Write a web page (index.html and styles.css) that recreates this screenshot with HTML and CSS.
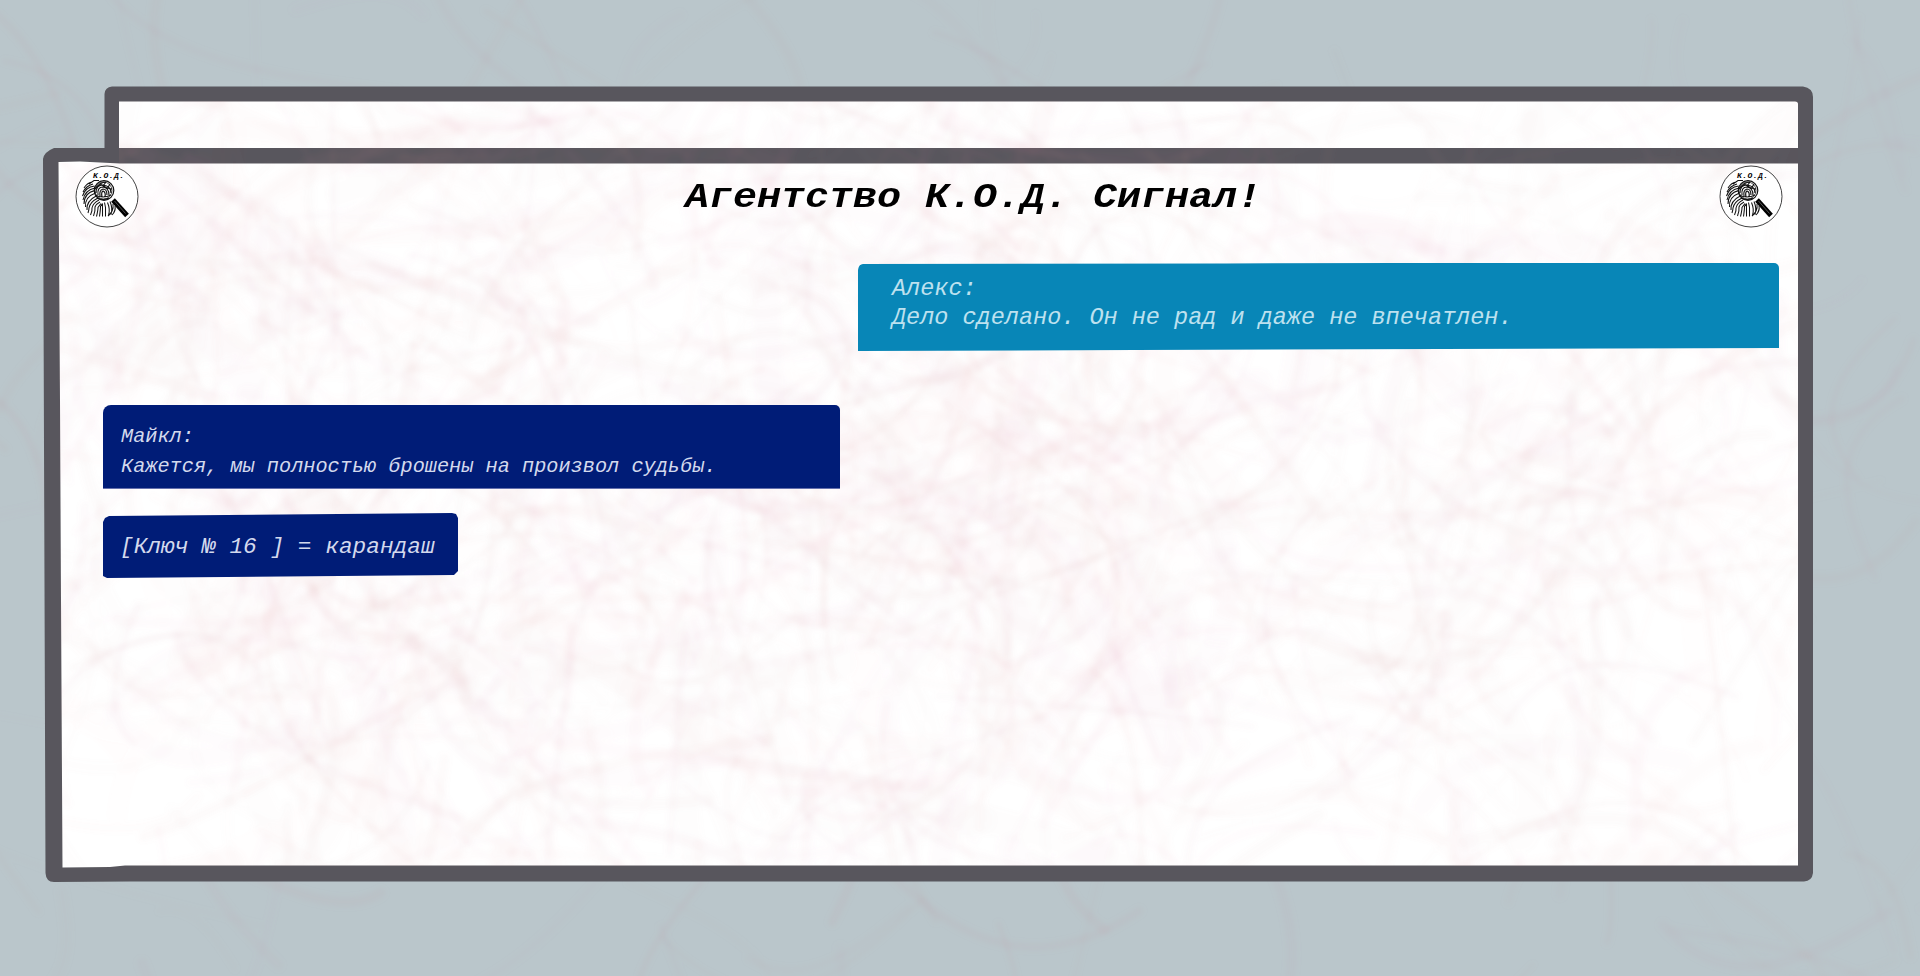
FILE: index.html
```html
<!DOCTYPE html>
<html lang="ru">
<head>
<meta charset="utf-8">
<title>Агентство К.О.Д. Сигнал!</title>
<link rel="stylesheet" href="styles.css">
</head>
<body>
<svg class="scene" viewBox="0 0 1920 976" aria-hidden="true">
  <defs>
    <filter id="soft" x="0" y="0" width="1920" height="976" filterUnits="userSpaceOnUse"><feGaussianBlur stdDeviation="2.4"/></filter>
    <filter id="edge" x="0" y="0" width="1920" height="976" filterUnits="userSpaceOnUse"><feGaussianBlur stdDeviation="0.6"/></filter>
    <clipPath id="paper"><path d="M119 101H1798V866H62L58 163H119Z"/></clipPath>
  </defs>
  <g id="haze" class="haze" filter="url(#soft)"></g>
  <g filter="url(#edge)">
    <path class="frame" d="M112 86.500H1803Q1813 88 1813 97V873Q1812 881 1804 881.500H130L54 882Q46 882 45.500 873L43 159Q44 152 54 148H104.500V94Q105 87 112 86.500Z"/>
    <path class="sheet" d="M119 101.500H1795Q1798 101.500 1798 104V148H119Z"/>
    <path class="sheet" d="M58.500 162L80 161.500L120 163.500H1798V865.500H125L110 867L62.500 867.500L61 600L60 400Z"/>
  </g>
  <g id="veins" class="veins" clip-path="url(#paper)" filter="url(#soft)"></g>
</svg>

<svg width="64" height="64" class="defs" aria-hidden="true">
  <symbol id="badge" viewBox="0 0 64 64">
    <ellipse cx="32" cy="31.500" rx="31" ry="30.500" fill="#fff" stroke="#111" stroke-width=".8"/>
    <g fill="none" stroke="#111" stroke-width="1.050">
      <path d="M9 23q3-5 8-6M8 27q3-6 10-8M7.500 31q3-9 12-10M8 35q2-10 12-12M9 39q0-11 11-13.500M10.500 42q-1-10 10-14M14 19l5-3.500h5"/>
      <path d="M12 45q-1-9 10-14.500M13 48q1-3 1-5q1-6 9-10M15.500 50q2-4 1.500-7q1-5 7-8M18.500 51q2-5 1.500-9q1-3 5-5M21.500 51.500q1.500-6 1.500-9l3-4M24.500 51.500q1-7 1-10l2-3M27.500 51.500v-13M30.500 51.500v-9l-1-5M33.500 50.500q2-6-1-13M36 49.500q2-6-1-13M33 51q6-5 5-12M37 50q4-4 3-9"/>
      <circle cx="29" cy="25.500" r="9.800" stroke-width="1.200"/>
      <circle cx="28.500" cy="25.500" r="8.500" stroke-width=".7"/>
      <path d="M21 28q0-8 7-8q8 1 8 8M23 30q-1-8 5-8q6 1 6 8M25 31q-1-6 3-7q4 0 4 6M27 32q-1-5 1-6q3 1 2 6M20 24q5-7 11-7M25 19l7 4l5 1M31 17l-3 4M35 19l-3 5M20 30q8 4 16 0M22 33q6 3 12 0" stroke-width="1.200"/>
    </g>
    <path d="M38 35L52 50.500" stroke="#000" stroke-width="5" fill="none"/>
    <path d="M39.500 36L50.500 48.500" stroke="#777" stroke-width=".7" fill="none"/>
    <text x="18" y="13" class="badge-text" textLength="31">К.О.Д.</text>
  </symbol>
</svg>

<main class="window">
  <header class="header">
    <svg class="badge"><use href="#badge"/></svg>
    <h1 class="title">Агентство К.О.Д. Сигнал!</h1>
    <svg class="badge"><use href="#badge"/></svg>
  </header>
  <section class="chat">
    <article class="bubble alex">
      <p class="line">Алекс:</p>
      <p class="line">Дело сделано. Он не рад и даже не впечатлен.</p>
    </article>
    <article class="bubble michael">
      <p class="line">Майкл:</p>
      <p class="line">Кажется, мы полностью брошены на произвол судьбы.</p>
    </article>
    <article class="bubble key">
      <p class="line">[Ключ № 16 ] = карандаш</p>
    </article>
  </section>
</main>
<script src="texture.js"></script>
</body>
</html>
```
FILE: styles.css
```css
* { box-sizing: border-box; }

body {
  margin: 0;
  width: 1920px;
  height: 976px;
  overflow: hidden;
  background: #bac6cb;
  font-family: "Liberation Mono", monospace;
}

.scene {
  position: absolute;
  inset: 0;
  width: 1920px;
  height: 976px;
}

.defs { position: absolute; }
.frame { fill: #58575d; }
.sheet { fill: #fff; }
.veins, .haze { fill: none; stroke-linecap: round; }
.veins { stroke: #d6949c; }
.haze { stroke: #bd9aa2; }

.window {
  position: relative;
  padding: 165px 137px 0 75px;
}

.header {
  display: flex;
  justify-content: space-between;
  height: 98px;
}

.badge {
  width: 64px;
  height: 64px;
  overflow: visible;
}

.badge-text {
  font: italic bold 8px "Liberation Mono", monospace;
}

.title {
  margin: 6px 0 0 88px;
  font-size: 40px;
  line-height: 48px;
  font-style: italic;
  font-weight: bold;
  white-space: nowrap;
  color: #000;
  transform: scaleY(0.86);
}

.chat {
  display: flex;
  flex-direction: column;
  align-items: flex-start;
  padding: 0 4px 0 28px;
}

.bubble { font-style: italic; }

.line {
  margin: 0;
  white-space: nowrap;
}

.alex {
  align-self: flex-end;
  width: 921px;
  height: 89px;
  padding: 12px 0 0 34px;
  background: #0886b7;
  color: #bde1ef;
  font-size: 23.5px;
  line-height: 28.5px;
  border-radius: 7px 5px 0 0;
  clip-path: polygon(0 5px, 1px 2px, 5px 1px, 40% 0.5px, 96% -1px, 100% 0, 100% 85px, 30% 87px, 0 88px);
}

.michael {
  width: 737px;
  height: 84px;
  margin-top: 53px;
  padding: 17px 0 0 18px;
  background: #001c77;
  color: #d3d9ed;
  font-size: 20.25px;
  line-height: 29.5px;
  border-radius: 8px 5px 0 0;
  border-bottom: 1px solid #6570ad;
}

.key {
  width: 355px;
  height: 66px;
  margin-top: 24px;
  padding: 19px 0 0 17px;
  background: #001c77;
  color: #d3d9ed;
  font-size: 22.8px;
  line-height: 30px;
  clip-path: polygon(0 9px, 2px 5px, 6px 3px, 349px 0, 353px 1px, 355px 5px, 355px 58px, 351px 62px, 4px 65px, 0 63px);
}
```
FILE: texture.js
```javascript
// Scatters faint curved strokes over the paper, denser near the knots.
let seed = 77;
const rnd = () => (seed = (seed * 16807) % 2147483647) / 2147483647;
const knots = [[400, 250], [1010, 540], [400, 620], [1040, 130], [1500, 480], [240, 330], [700, 640], [1000, 480]];

function scatter(id, count, alpha, wide, loose) {
  const host = document.getElementById(id);
  for (let i = 0; i < count; i++) {
    const k = knots[Math.floor(rnd() * knots.length)];
    const free = rnd() < loose;
    const x = free ? rnd() * 1920 : k[0] + (rnd() + rnd() - 1) * 330;
    const y = free ? 90 + rnd() * 880 : k[1] + (rnd() + rnd() - 1) * 260;
    const a = rnd() * Math.PI * 2;
    const len = 90 + rnd() * 260;
    const bend = (rnd() - 0.5) * 1.3;
    const p = document.createElementNS("http://www.w3.org/2000/svg", "path");
    const at = (r, t) => (x + Math.cos(t) * r).toFixed(1) + " " + (y + Math.sin(t) * r).toFixed(1);
    p.setAttribute("d", `M${at(0, a)}C${at(len * 0.35, a + bend)} ${at(len * 0.8, a + bend)} ${at(len, a)}`);
    p.setAttribute("stroke-width", (3 + rnd() * wide).toFixed(1));
    p.setAttribute("stroke-opacity", (alpha * (0.3 + rnd() * 0.7)).toFixed(3));
    host.append(p);
  }
}

scatter("haze", 240, 0.1, 8, 0.8);
scatter("veins", 900, 0.048, 10, 0.55);
scatter("veins", 260, 0.03, 30, 0.4);
```
